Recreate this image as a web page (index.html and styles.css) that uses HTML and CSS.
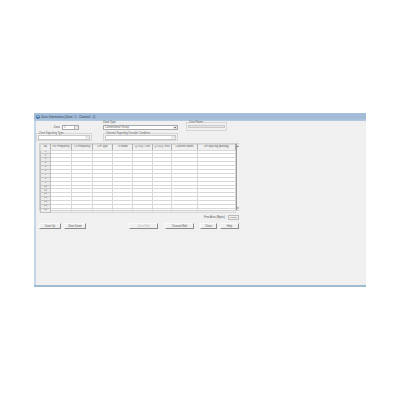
FILE: index.html
```html
<!DOCTYPE html>
<html lang="en">
<head>
<meta charset="utf-8">
<title>Zone Information</title>
<link rel="stylesheet" href="styles.css">
</head>
<body>
<div class="window">
  <div class="titlebar">
    <svg class="appicon" viewBox="0 0 4 4"><circle cx="2" cy="2" r="1.8" fill="#2a5f9e"/><circle cx="2" cy="1.6" r="0.8" fill="#dfe9f5"/></svg>
    <span>Zone Information (Zone : 1&nbsp;&nbsp; Channel : 1)</span>
  </div>
  <div class="client">
    <div class="top">
      <div class="col-a">
        <div class="zone-row">
          <span>Zone</span>
          <div class="field spin"><span>1</span><i class="arrows"></i></div>
        </div>
        <fieldset class="group">
          <legend>Zone Signaling Type</legend>
          <div class="field pick"><span></span><b>...</b></div>
        </fieldset>
      </div>
      <div class="col-b">
        <div class="label">Zone Type</div>
        <div class="field select"><span>Conventional Group</span><b class="dropbtn"></b></div>
        <fieldset class="group">
          <legend>Optional Signaling Decode Condition</legend>
          <div class="field pick"><span></span><b>...</b></div>
        </fieldset>
      </div>
      <div class="col-c">
        <fieldset class="group name">
          <legend>Zone Name</legend>
          <div class="field"></div>
        </fieldset>
      </div>
    </div>
    <div class="gridwrap">
      <table class="grid">
        <colgroup>
          <col class="c-no"><col class="c-f"><col class="c-f"><col class="c-t"><col class="c-t"><col class="c-t"><col class="c-s"><col class="c-n"><col class="c-x">
        </colgroup>
        <thead>
          <tr><th>No.</th><th>RX Frequency</th><th>TX Frequency</th><th>CH Type</th><th>Tx Mode</th><th>QT/DQT Dec</th><th>QT/DQT Enc</th><th>Channel Name</th><th>CH Spacing (Analog)</th></tr>
        </thead>
        <tbody>
          <tr><th>1</th><td></td><td></td><td></td><td></td><td></td><td></td><td></td><td></td></tr>
          <tr><th>2</th><td></td><td></td><td></td><td></td><td></td><td></td><td></td><td></td></tr>
          <tr><th>3</th><td></td><td></td><td></td><td></td><td></td><td></td><td></td><td></td></tr>
          <tr><th>4</th><td></td><td></td><td></td><td></td><td></td><td></td><td></td><td></td></tr>
          <tr><th>5</th><td></td><td></td><td></td><td></td><td></td><td></td><td></td><td></td></tr>
          <tr><th>6</th><td></td><td></td><td></td><td></td><td></td><td></td><td></td><td></td></tr>
          <tr><th>7</th><td></td><td></td><td></td><td></td><td></td><td></td><td></td><td></td></tr>
          <tr><th>8</th><td></td><td></td><td></td><td></td><td></td><td></td><td></td><td></td></tr>
          <tr><th>9</th><td></td><td></td><td></td><td></td><td></td><td></td><td></td><td></td></tr>
          <tr><th>10</th><td></td><td></td><td></td><td></td><td></td><td></td><td></td><td></td></tr>
          <tr><th>11</th><td></td><td></td><td></td><td></td><td></td><td></td><td></td><td></td></tr>
          <tr><th>12</th><td></td><td></td><td></td><td></td><td></td><td></td><td></td><td></td></tr>
          <tr><th>13</th><td></td><td></td><td></td><td></td><td></td><td></td><td></td><td></td></tr>
          <tr><th>14</th><td></td><td></td><td></td><td></td><td></td><td></td><td></td><td></td></tr>
          <tr><th>15</th><td></td><td></td><td></td><td></td><td></td><td></td><td></td><td></td></tr>
          <tr><th>16</th><td></td><td></td><td></td><td></td><td></td><td></td><td></td><td></td></tr>
        </tbody>
      </table>
      <div class="scrollbar"><span class="sbtn">▴</span><span class="sbtn">▾</span></div>
    </div>
    <div class="free">
      <span>Free Area (Bytes)</span>
      <div class="field freebox">15360</div>
    </div>
    <div class="buttons">
      <button class="w22">Zone Up</button>
      <button class="w22">Zone Down</button>
      <button class="w29 off">Zone Edit</button>
      <button class="w29">Channel Edit</button>
      <button class="w17">Close</button>
      <button class="w19">Help</button>
    </div>
  </div>
</div>
</body>
</html>
```
FILE: styles.css
```css
* { box-sizing: border-box; }
html, body { margin: 0; background: #fff; }
body {
  width: 400px;
  height: 400px;
  padding: 113px 34px 0;
  font-family: "Liberation Sans", Arial, sans-serif;
  font-size: 2.7px;
  line-height: 3px;
  color: #555;
}
.window {
  width: 332px;
  height: 174px;
  display: flex;
  flex-direction: column;
  background: #c3d7e8;
  padding: 0 0 0 2px;
  border-bottom: 2.5px solid #9dbcd2;
}
.titlebar {
  height: 8px;
  margin-left: -2px;
  padding-left: 2px;
  display: flex;
  align-items: center;
  gap: 1px;
  background: linear-gradient(#a6bfda, #9fb9d6 60%, #b4cae0);
  color: #33465a;
  font-size: 3px;
}
.appicon { width: 4px; height: 4px; }
.client {
  flex: 1;
  background: #f0f0f0;
}
.top { display: flex; height: 22px; }
.col-a { width: 56px; margin-right: 11px; display: flex; flex-direction: column; }
.col-b { width: 75px; margin-right: 8px; }
.col-c { width: 41px; }
.zone-row {
  height: 11px;
  display: flex;
  align-items: center;
  justify-content: flex-end;
  gap: 2px;
  padding-top: 1px;
}
.label { height: 4px; }
.field {
  height: 5px;
  background: #fff;
  border: 0.5px solid #a8a8a8;
  display: flex;
  align-items: center;
  justify-content: space-between;
  padding-left: 1px;
}
.spin { width: 17px; margin-right: 13px; }
.arrows {
  width: 4px;
  height: 100%;
  background: #e8e8e8;
  border-left: 0.5px solid #bbb;
}
.select b.dropbtn {
  width: 4px;
  height: 100%;
  background: #e8e8e8;
  display: flex;
  align-items: center;
  justify-content: center;
}
.select b.dropbtn::after {
  content: "";
  border: 1px solid transparent;
  border-top: 1.5px solid #111;
  border-bottom: 0;
}
.group {
  height: 9px;
  margin: 0;
  padding: 0 1px 1px;
  border: 0.5px solid #d6d6d6;
  min-width: 0;
}
.col-b .group { margin-top: 2px; }
.group legend { padding: 0; margin-left: 1px; font-size: 2.7px; line-height: 3px; }
.group .field { height: 4.5px; border-color: #c8c8c8; }
.pick b { font-weight: normal; width: 4px; height: 100%; text-align: center; background: #ececec; line-height: 2px; color: #888; }
.name { height: 10px; }
.name .field { background: #e6e6e6; border-color: #c8c8c8; margin-top: 1px; height: 3px; }
.gridwrap {
  display: flex;
  width: 200px;
  height: 68px;
  margin: 0 0 0 3px;
  background: #fff;
  border: 0.5px solid #d0d0d0;
}
.grid {
  width: 194.5px;
  height: 67px;
  table-layout: fixed;
  border-collapse: collapse;
}
.c-no { width: 10px; }
.c-f { width: 21px; }
.c-t { width: 20px; }
.c-s { width: 19px; }
.c-n { width: 26px; }
.c-x { width: 37.5px; }
.grid th, .grid td {
  padding: 0;
  overflow: hidden;
  white-space: nowrap;
  font-size: 2.7px;
  line-height: 2.5px;
  font-weight: normal;
  text-align: center;
  border: 0.5px solid #d8d8d8;
}
.grid thead th { height: 5.5px; background: #f0f0f0; border-right-color: #b0b0b0; }
.grid tbody th { background: #ececec; height: 3.9px; border-color: #c0c0c0; }
.scrollbar {
  width: 5px;
  display: flex;
  flex-direction: column;
  justify-content: space-between;
  background: #f4f4f4;
  border-left: 1px solid #999;
  font-size: 3px;
  color: #444;
}
.sbtn {
  height: 4px;
  background: #ececec;
  text-align: center;
  line-height: 4px;
}
.free {
  width: 203px;
  height: 5px;
  margin: 4px 0 0 0;
  display: flex;
  justify-content: flex-end;
  align-items: center;
  gap: 3px;
}
.freebox {
  width: 11px;
  background: #f0f0f0;
  border-color: #bbb;
  justify-content: center;
  padding: 0;
  font-size: 2.5px;
}
.buttons {
  display: flex;
  width: 203px;
  margin-top: 3px;
  padding-left: 3px;
}
.buttons button {
  height: 6px;
  margin: 0;
  padding: 0;
  font: inherit;
  color: inherit;
  background: #f0f0f0;
  border: 0.5px solid;
  border-color: #fafafa #8c8c8c #8c8c8c #fafafa;
}
.w22 { width: 22px; margin-right: 3px !important; }
.w22 + .w22 { margin-right: 43px !important; }
.w29 { width: 29px; margin-right: 7px !important; }
.w29 + .w29 { margin-right: 6px !important; }
.w17 { width: 17px; margin-right: 3px !important; }
.w19 { width: 19px; }
.buttons .off { color: #b5b5b5; }
```
